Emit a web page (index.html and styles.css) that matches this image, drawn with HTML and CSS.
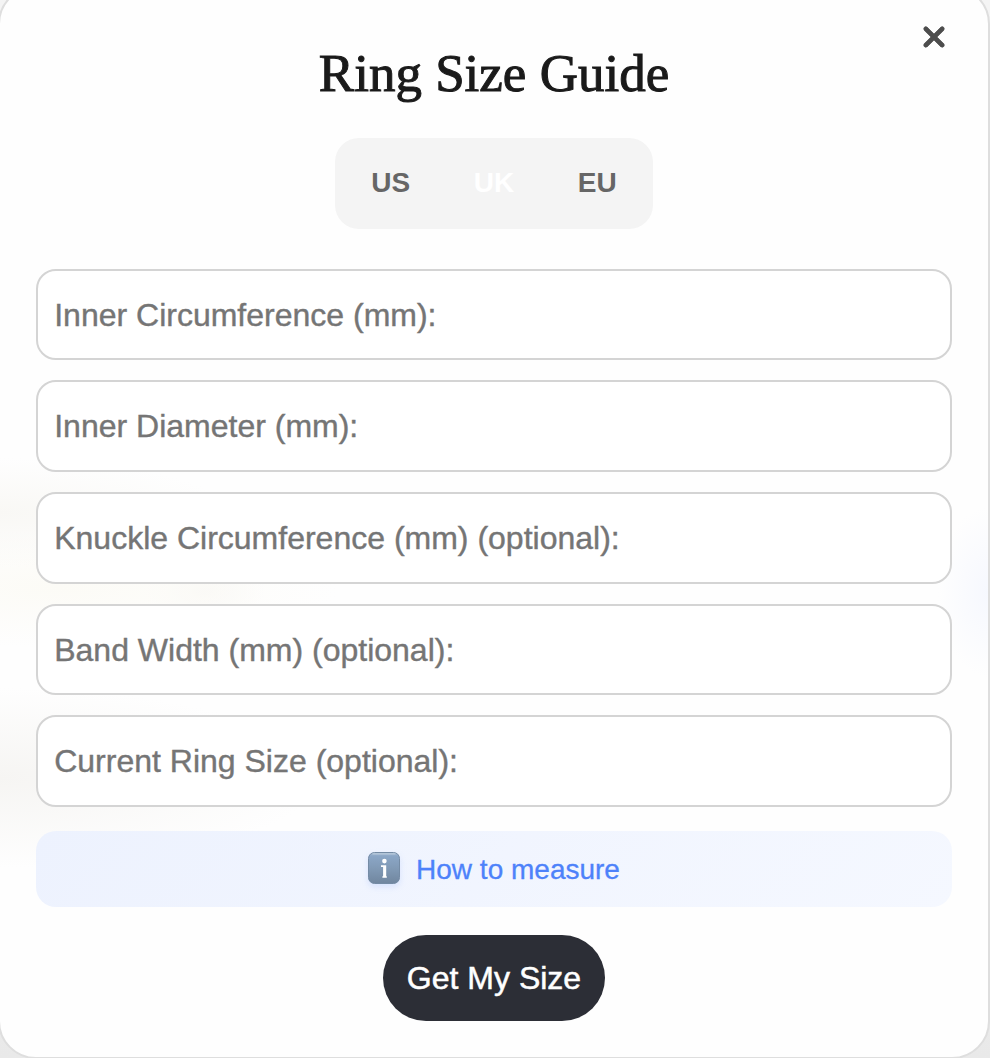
FILE: index.html
```html
<!DOCTYPE html>
<html lang="en">
<head>
<meta charset="utf-8">
<title>Ring Size Guide</title>
<link rel="stylesheet" href="styles.css">
</head>
<body>
<main class="dialog">
  <button class="close" aria-label="Close">
    <svg width="22" height="22" viewBox="0 0 22 22"><path d="M2.6 2.6 19.4 19.4M19.4 2.6 2.6 19.4" stroke="#4d4d4d" stroke-width="4.2" fill="none"/><path d="M2.8 2.8 19.2 19.2M19.2 2.8 2.8 19.2" stroke="#4d4d4d" stroke-width="4.6" stroke-linecap="round" fill="none"/></svg>
  </button>
  <h1 class="title">Ring Size Guide</h1>
  <div class="units">
    <span class="unit">US</span>
    <span class="unit unit-active">UK</span>
    <span class="unit">EU</span>
  </div>
  <form class="fields">
    <label class="field">Inner Circumference (mm):</label>
    <label class="field">Inner Diameter (mm):</label>
    <label class="field">Knuckle Circumference (mm) (optional):</label>
    <label class="field">Band Width (mm) (optional):</label>
    <label class="field">Current Ring Size (optional):</label>
  </form>
  <div class="help">
    <svg class="info" width="32" height="32" viewBox="0 0 32 32">
      <defs><linearGradient id="g" x1="0" y1="0" x2="0" y2="1"><stop offset="0" stop-color="#a3bad2"/><stop offset=".12" stop-color="#8ba6c6"/><stop offset=".5" stop-color="#819ab6"/><stop offset="1" stop-color="#70869f"/></linearGradient></defs>
      <rect x=".5" y=".5" width="31" height="31" rx="6" fill="url(#g)" stroke="#748ba5" stroke-width="1"/>
      <path d="M5 1.9H27" stroke="#b9cadc" stroke-width="1.3" stroke-linecap="round"/>
      <circle cx="16.4" cy="9.1" r="2.3" fill="#fff"/>
      <path d="M13 13.2h5.2V24.2h.6v1.5h-4.4v-1.5h.7V14.9H13z" fill="#fff"/>
    </svg>
    <span class="help-text">How to measure</span>
  </div>
  <button class="submit">Get My Size</button>
</main>
</body>
</html>
```
FILE: styles.css
```css
* { box-sizing: border-box; }
html { height: 1058px; overflow: hidden; }
body {
  margin: 0;
  height: 1058px;
  overflow: hidden;
  background: linear-gradient(#f4f4f4 60%, #e9e9e9);
  font-family: "Liberation Sans", Arial, sans-serif;
}
.dialog {
  position: relative;
  display: flex;
  flex-direction: column;
  align-items: center;
  width: 992px;
  height: 1073px;
  margin: -14px 0 0 -2px;
  padding: 53px 36px 0;
  border: 2px solid #dedede;
  border-radius: 38px;
  background:
    radial-gradient(ellipse 230px 55px at 0 525px, #f9f8f5 0, #f9f8f500 100%),
    radial-gradient(ellipse 280px 60px at 60px 600px, #fcfbf6 0, #fcfbf600 100%),
    radial-gradient(ellipse 60px 30px at 205px 603px, #f9f8f6 0, #f9f8f600 100%),
    radial-gradient(ellipse 320px 90px at 0 790px, #f6f5f3 0, #f6f5f300 100%),
    radial-gradient(ellipse 50px 85px at 100% 604px, #f6f8fe 0, #f6f8fe00 100%),
    #fefefe;
}
.close {
  position: absolute;
  top: 38px;
  right: 43px;
  width: 22px;
  height: 22px;
  padding: 0;
  border: 0;
  background: none;
}
.close svg { display: block; }
.title {
  margin: 0;
  height: 64px;
  font: 400 53px/64px "Liberation Serif", serif;
  color: #1a1a1a;
  -webkit-text-stroke: 1px #1a1a1a;
}
.units {
  display: flex;
  align-items: center;
  width: 318px;
  height: 91px;
  margin-top: 33px;
  padding: 0 4px 1px;
  border-radius: 24px;
  background: #f4f4f4;
}
.unit {
  flex: 1;
  text-align: center;
  font-size: 28px;
  font-weight: 700;
  color: #666;
}
.unit-active { color: #fff; }
.fields {
  display: flex;
  flex-direction: column;
  gap: 20px;
  width: 916px;
  margin-top: 39.8px;
}
.field {
  display: flex;
  align-items: center;
  height: 91.6px;
  padding: 1.6px 16px 0 16.2px;
  border: 2px solid #d4d4d4;
  border-radius: 20px;
  background: #fff;
  color: #757575;
  font-size: 32px;
  -webkit-text-stroke: 0.4px #757575;
}
.help {
  display: flex;
  align-items: center;
  justify-content: center;
  gap: 16px;
  width: 916px;
  height: 76px;
  margin-top: 24.2px;
  padding-bottom: 2px;
  border-radius: 20px;
  background: linear-gradient(135deg, #edf2fe, #f5f8ff);
  color: #4d82fa;
  font-size: 28px;
  -webkit-text-stroke: 0.3px #4d82fa;
}
.help-text { padding-top: 5px; }
.info { filter: drop-shadow(0 3px 3px #4d82fa26); }
.submit {
  width: 222px;
  height: 86px;
  margin-top: 28px;
  padding: 2px 0 0;
  border: 0;
  border-radius: 43px;
  background: #2c2e36;
  color: #fff;
  font: 32px "Liberation Sans", Arial, sans-serif;
  -webkit-text-stroke: 0.5px #fff;
}
```
